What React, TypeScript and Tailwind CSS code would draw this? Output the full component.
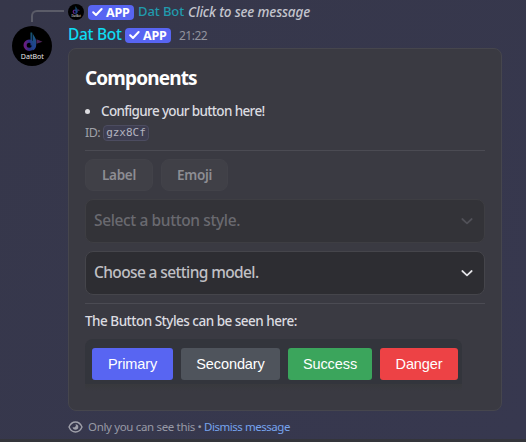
import React from "react";

function AppBadge() {
  return (
    <span className="flex h-[15px] w-[46px] shrink-0 items-center rounded-[4px] bg-[#5865f2] pl-[4px] text-[12.5px] font-bold leading-[15px] tracking-[-0.2px] text-white">
      <svg className="mr-[3px] shrink-0" width="11" height="10" viewBox="0 0 11 10" fill="none" stroke="white" strokeWidth="2" strokeLinecap="round" strokeLinejoin="round">
        <path d="M1.2 5.2 4 8 9.6 2" />
      </svg>
      APP
    </span>
  );
}

function Avatar({ size }: { size: number }) {
  return (
    <svg className="shrink-0" width={size} height={size} viewBox="0 0 40 40">
      <defs>
        <linearGradient id="note" x1="0" y1="0" x2="1" y2="0">
          <stop offset="0" stopColor="#6a1c80" />
          <stop offset="0.55" stopColor="#2a2f88" />
          <stop offset="1" stopColor="#1b4a80" />
        </linearGradient>
        <linearGradient id="stem" x1="0" y1="0" x2="0" y2="1">
          <stop offset="0" stopColor="#17607a" />
          <stop offset="1" stopColor="#243a94" />
        </linearGradient>
      </defs>
      <circle cx="20" cy="20" r="20" fill="#000" />
      <circle cx="17.200" cy="19.200" r="4.100" fill="none" stroke="url(#note)" strokeWidth="3.200" />
      <path d="M18.500 6.500h1.400v13h-1.400z" fill="url(#stem)" />
      <path d="M20.600 6c.2 3.500 3.600 5.500 3.600 9.500v3.500c0 3-1.500 4.800-3.600 5.600z" fill="url(#stem)" />
      <path d="M24.500 13.200l6 2.500-6 2z" fill="#4d2459" />
      <text x="20.300" y="32.800" textAnchor="middle" textLength="23" lengthAdjust="spacingAndGlyphs" fontSize="6.800" fontFamily="Noto Sans, sans-serif" fill="#e8e8e8">DatBot</text>
    </svg>
  );
}

function SelectBox({ label, disabled }: { label: string; disabled?: boolean }) {
  return (
    <div className={`flex h-[44px] items-center justify-between rounded-[8px] border pl-2 pr-[11px] ${disabled ? "border-[#3e3e43] bg-[#333338] text-[#6a6a70]" : "border-[#45454b] bg-[#2d2d32] text-[#c0c0c5]"}`}>
      <span className={`text-[15.5px] font-medium ${disabled ? "tracking-[-0.38px]" : "tracking-[-0.62px]"}`}>{label}</span>
      <svg width="12" height="8" viewBox="0 0 12 8" fill="none" stroke={disabled ? "#515158" : "#e4e4e8"} strokeWidth="1.7" strokeLinecap="round" strokeLinejoin="round">
        <path d="M1.300 2 6 6.300 10.700 2" />
      </svg>
    </div>
  );
}

export default function App() {
  return (
    <div className="flex h-[442px] w-[526px] flex-col overflow-hidden whitespace-nowrap bg-[#37384c] font-['Noto_Sans',sans-serif]">
      <div className="flex h-[439px] bg-linear-to-br from-[#36374a] to-[#37384f]">
        <div className="flex w-[68px] shrink-0 flex-col pl-3 pt-[10px]">
          <div className="ml-[19px] h-[12px] w-[33px] rounded-tl-[6px] border-l-2 border-t-2 border-[#5b5c68]" />
          <div className="mt-[4px]"><Avatar size={40} /></div>
        </div>
        <div className="flex w-[434px] shrink-0 flex-col">
          <div className="mt-[3px] flex h-[18px] items-center">
            <Avatar size={16} />
            <span className="ml-1 flex"><AppBadge /></span>
            <span className="ml-[4px] w-[50px] text-[13px] font-medium tracking-[-0.1px] text-[#219bae]">Dat Bot</span>
            <span className="text-[13.500px] font-medium italic tracking-[-0.15px] text-[#c4c5ce]">Click to see message</span>
          </div>
          <div className="mt-[4px] flex h-5 items-center">
            <span className="w-[57px] text-[15.5px] font-medium tracking-[-0.3px] text-[#0fdcf2]">Dat Bot</span>
            <AppBadge />
            <span className="ml-2 pt-[2px] text-[12px] tracking-[-0.5px] text-[#92939e]">21:22</span>
          </div>
          <div className="mt-[3px] flex h-[363px] flex-col rounded-[8px] border border-[#46464d] bg-[#3a3a42] px-4">
            <h1 className="mt-[17px] h-6 text-[19px] font-bold leading-6 tracking-[-0.85px] text-white">Components</h1>
            <div className="mt-[11px] flex h-5 items-center text-[13.500px] font-medium tracking-[-0.640px] text-[#dcdce0]">
              <span className="mr-[11px] h-[5px] w-[5px] rounded-full bg-[#dcdce0]" />
              Configure your button here!
            </div>
            <div className="mt-[3px] flex h-[18px] items-center text-[12.500px] text-[#9fa0a8]">
              <span className="w-[18px] tracking-[-0.5px]">ID:</span>
              <code className="flex h-4 w-[46px] items-center justify-center rounded-[4px] border border-[#4c4c60] bg-[#3d3d50] font-['DejaVu_Sans_Mono',monospace] text-[11px] text-[#b3b3bf]">gzx8Cf</code>
            </div>
            <div className="mt-[8px] h-px shrink-0 bg-[#4b4b53]" />
            <div className="mt-[8px] flex gap-2 text-[13.500px] font-semibold tracking-[-0.3px] text-[#8d8d93]">
              <span className="flex h-8 w-[68px] items-center justify-center rounded-[8px] border border-[#424249] bg-[#404047]">Label</span>
              <span className="flex h-8 w-[67px] items-center justify-center rounded-[8px] border border-[#424249] bg-[#404047]">Emoji</span>
            </div>
            <div className="mt-2 flex flex-col gap-2">
              <SelectBox label="Select a button style." disabled />
              <SelectBox label="Choose a setting model." />
            </div>
            <div className="mt-2 h-px shrink-0 bg-[#4b4b53]" />
            <p className="mt-[7px] h-5 text-[13.500px] font-medium leading-5 tracking-[-0.5px] text-[#dcdce0]">The Button Styles can be seen here:</p>
            <div className="mt-[8px] flex h-[45px] w-[377px] shrink-0 gap-2 rounded-t-[8px] bg-[#33353c] pl-[7px] pt-[9px] font-['Liberation_Sans',sans-serif] text-[14.500px] leading-8 tracking-[-0.1px] text-white">
              <span className="flex h-8 w-[81px] justify-center rounded-[3px] bg-[#5865f2]">Primary</span>
              <span className="flex h-8 w-[99px] justify-center rounded-[3px] bg-[#4f545c]">Secondary</span>
              <span className="flex h-8 w-[84px] justify-center rounded-[3px] bg-[#3ba55c]">Success</span>
              <span className="flex h-8 w-[78px] justify-center rounded-[3px] bg-[#ed4245]">Danger</span>
            </div>
            <div className="h-[7px] w-[377px] bg-linear-to-b from-[#38393d] to-[#3a3a42]" />
          </div>
          <div className="mt-[7px] flex h-[18px] items-center text-[11.500px] text-[#989aa6]">
            <svg className="mr-[5px] shrink-0" width="15" height="12" viewBox="0 0 15 12" fill="none">
              <path d="M1 6c1.500-3.400 4-5 6.500-5S12.500 2.600 14 6c-1.500 3.400-4 5-6.500 5S2.500 9.400 1 6Z" stroke="#a0a1ab" strokeWidth="1.400" />
              <path d="M7.500 3.200A2.800 2.800 0 1 1 4.700 6a2 2 0 0 0 2.800-2.800Z" fill="#a0a1ab" />
            </svg>
            <span className="w-[116px] tracking-[-0.34px]">Only you can see this •</span>
            <span className="tracking-[-0.46px] text-[#76a4ee]">Dismiss message</span>
          </div>
        </div>
      </div>
      <div className="h-[3px] bg-[#34353b]" />
    </div>
  );
}
